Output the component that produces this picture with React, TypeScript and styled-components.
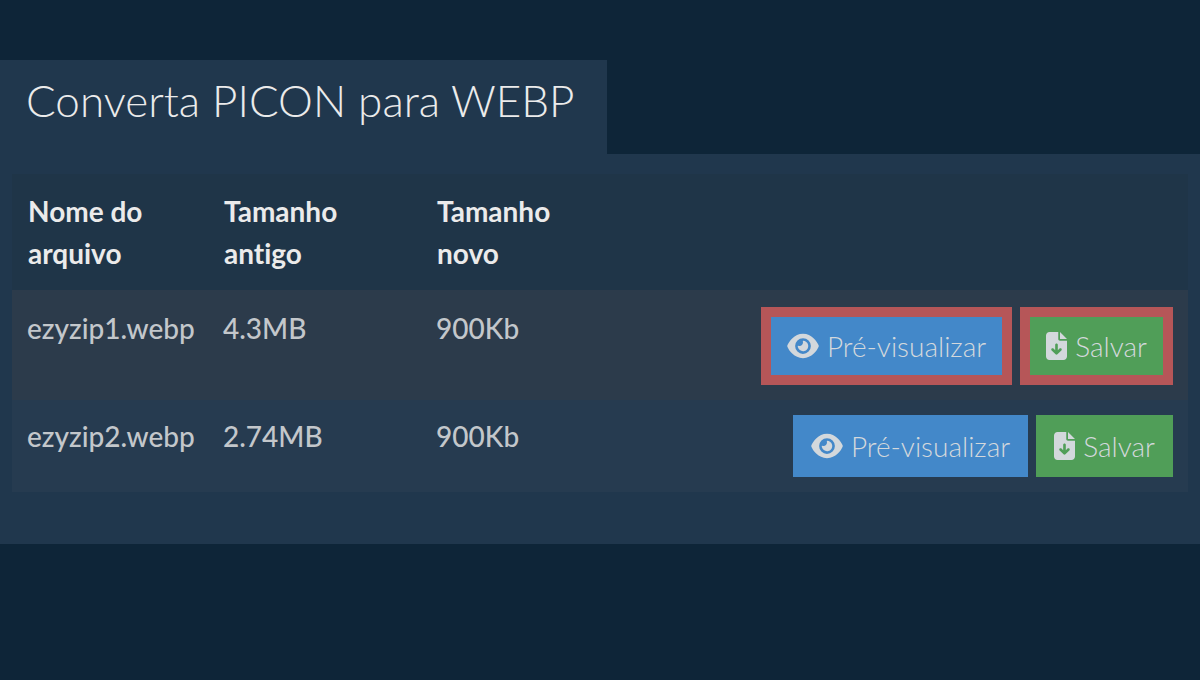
import React from "react";
import styled, { createGlobalStyle } from "styled-components";
import { FaEye, FaFileArrowDown } from "react-icons/fa6";

const GlobalStyle = createGlobalStyle`
  *, *::before, *::after { box-sizing: border-box; }
  body {
    margin: 0;
    background: #0e2538;
    color: #ebebeb;
    font-family: Lato, "Open Sans", sans-serif;
    font-size: 28px;
    line-height: 42px;
    font-variant-ligatures: none;
  }
`;

const Page = styled.main`
  padding: 60px 0;
`;

const Title = styled.h1`
  width: fit-content;
  margin: 0;
  padding: 12px 32px 26px 26px;
  background: #20374d;
  font-size: 44px;
  line-height: 56px;
  font-weight: 300;
`;

const Panel = styled.section`
  padding: 20px 12px 52px;
  background: #20374d;
`;

const FileTable = styled.table`
  width: 100%;
  table-layout: fixed;
  border-collapse: separate;
  border-spacing: 0;
`;

const HeadRow = styled.tr`
  background: #1f3548;
`;

const HeadCell = styled.th<{ $width?: string }>`
  width: ${(p) => p.$width ?? "auto"};
  padding: 16px;
  text-align: left;
  vertical-align: top;
  font-weight: 700;
`;

const Cell = styled.td`
  padding: 15px;
  vertical-align: top;
  color: #c3c7cb;
  font-weight: 500;
`;

const FileRow = styled.tr`
  background: #263b50;
  &:nth-child(odd) {
    background: #2c3b4b;
  }
  &:first-child ${Cell} {
    border-top: 2px solid #2c3b4b;
  }
`;

const Actions = styled.div`
  display: flex;
  justify-content: flex-end;
  gap: 8px;
`;

const ActionButton = styled.button<{ $color: string; $marked?: boolean }>`
  display: flex;
  align-items: center;
  gap: 8px;
  padding: 8px 16px;
  border: ${(p) => (p.$marked ? "10px solid #b65658" : `2px solid ${p.$color}`)};
  background: ${(p) => p.$color};
  color: #d3d8dc;
  font: inherit;
  font-weight: 300;
  white-space: nowrap;
  cursor: pointer;
`;

const PreviewIcon = styled(FaEye)`
  width: 32px;
  height: 28px;
`;

const SaveIcon = styled(FaFileArrowDown)`
  width: 21px;
  height: 28px;
`;

const files = [
  { name: "ezyzip1.webp", before: "4.3MB", after: "900Kb", marked: true },
  { name: "ezyzip2.webp", before: "2.74MB", after: "900Kb", marked: false },
];

export default function App() {
  return (
    <>
      <GlobalStyle />
      <Page>
        <Title>Converta PICON para WEBP</Title>
        <Panel>
          <FileTable>
            <thead>
              <HeadRow>
                <HeadCell scope="col" $width="196px">Nome do arquivo</HeadCell>
                <HeadCell scope="col" $width="213px">Tamanho<br />antigo</HeadCell>
                <HeadCell scope="col" $width="213px">Tamanho<br />novo</HeadCell>
                <HeadCell as="td" />
              </HeadRow>
            </thead>
            <tbody>
              {files.map((file) => (
                <FileRow key={file.name}>
                  <Cell>{file.name}</Cell>
                  <Cell>{file.before}</Cell>
                  <Cell>{file.after}</Cell>
                  <Cell>
                    <Actions>
                      <ActionButton type="button" $color="#4388c9" $marked={file.marked}>
                        <PreviewIcon aria-hidden />
                        Pré-visualizar
                      </ActionButton>
                      <ActionButton type="button" $color="#509e58" $marked={file.marked}>
                        <SaveIcon aria-hidden />
                        Salvar
                      </ActionButton>
                    </Actions>
                  </Cell>
                </FileRow>
              ))}
            </tbody>
          </FileTable>
        </Panel>
      </Page>
    </>
  );
}
